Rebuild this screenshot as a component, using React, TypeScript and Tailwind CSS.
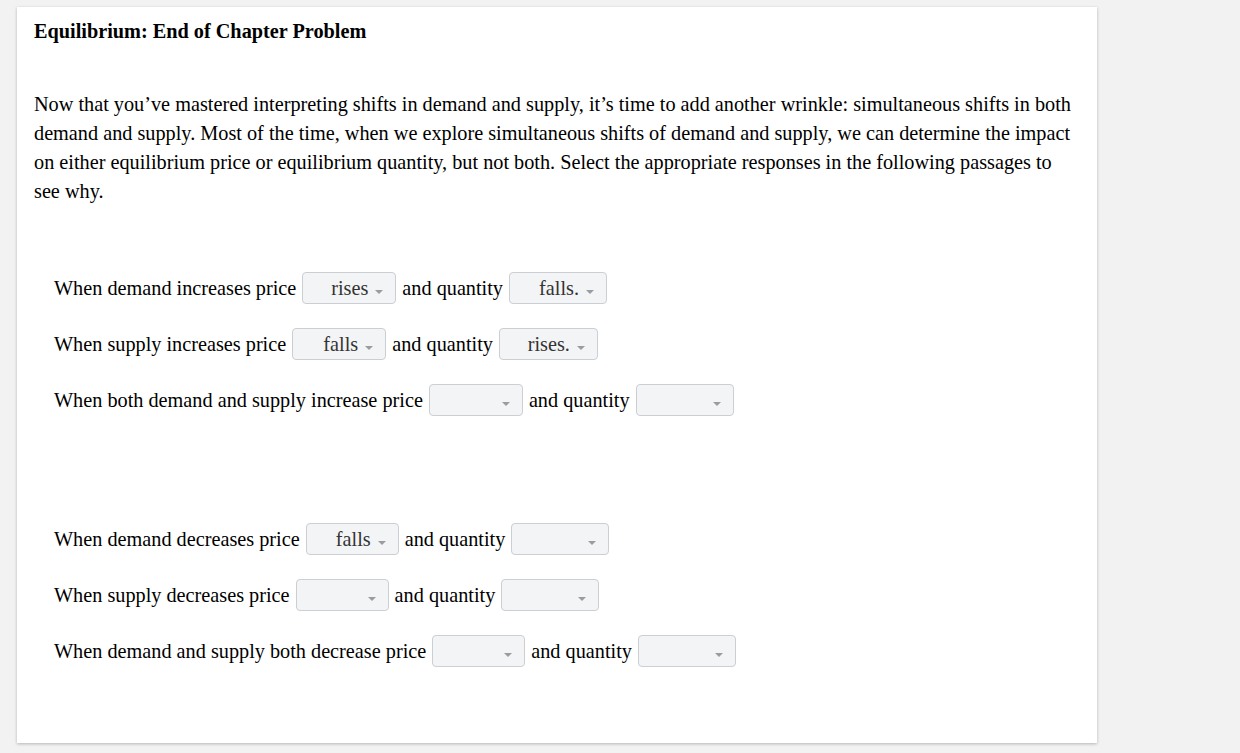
import React from "react";

function Drop({ value = "", width }: { value?: string; width: number }) {
  return (
    <span
      className="inline-flex h-[32px] items-center justify-end gap-[7px] rounded-[4px] border border-[#cbced3] bg-[#f3f4f6] pr-[12px] align-middle text-[20.25px] text-[#333]"
      style={{ width }}
    >
      <span className="leading-none">{value}</span>
      <svg width="8" height="5" viewBox="0 0 8 5" className="mt-[8px]">
        <path d="M0 0h8L4 4z" fill="#9a9ca0" />
      </svg>
    </span>
  );
}

function Row({ children }: { children: React.ReactNode }) {
  return <div className="flex h-[32px] items-center gap-[6px] text-[20.25px]">{children}</div>;
}

export default function App() {
  return (
    <div className="min-h-screen bg-[#f2f2f2] pt-[7px] pl-[17px] font-['Liberation_Serif',serif] text-black">
      <div className="h-[736px] w-[1080px] bg-white px-[17px] pt-[12px] shadow-[0_1px_3px_rgba(0,0,0,0.25)]">
        <h1 className="text-[20.25px] font-bold leading-[24px]">Equilibrium: End of Chapter Problem</h1>
        <p className="mt-[47px] text-[20.25px] leading-[29px]">
          Now that you’ve mastered interpreting shifts in demand and supply, it’s time to add another wrinkle: simultaneous shifts in both
          demand and supply. Most of the time, when we explore simultaneous shifts of demand and supply, we can determine the impact on
          either equilibrium price or equilibrium quantity, but not both. Select the appropriate responses in the following passages to
          see why.
        </p>
        <div className="mt-[66px] flex flex-col gap-[24px] pl-[20px]">
          <Row>
            When demand increases price <Drop value="rises" width={94} /> and quantity <Drop value="falls." width={98} />
          </Row>
          <Row>
            When supply increases price <Drop value="falls" width={94} /> and quantity <Drop value="rises." width={99} />
          </Row>
          <Row>
            When both demand and supply increase price <Drop width={94} /> and quantity <Drop width={98} />
          </Row>
        </div>
        <div className="mt-[107px] flex flex-col gap-[24px] pl-[20px]">
          <Row>
            When demand decreases price <Drop value="falls" width={93} /> and quantity <Drop width={98} />
          </Row>
          <Row>
            When supply decreases price <Drop width={93} /> and quantity <Drop width={98} />
          </Row>
          <Row>
            When demand and supply both decrease price <Drop width={93} /> and quantity <Drop width={98} />
          </Row>
        </div>
      </div>
    </div>
  );
}
